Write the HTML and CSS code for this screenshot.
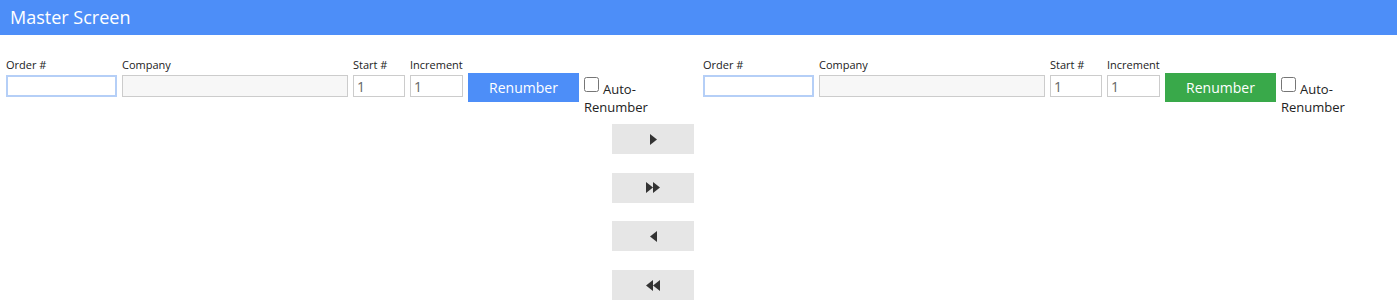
FILE: index.html
```
<!DOCTYPE html>
<html lang="en">
<head>
    <meta charset="UTF-8">
    <meta name="viewport" content="width=device-width, initial-scale=1.0">
    <title>Master Screen</title>
    <link rel="stylesheet" href="styles.css">
</head>
<body>
    <div class="title-bar">Master Screen</div>
    <div class="screen">
        <!-- source side -->
        <div class="panel">
            <div class="fields">
                <div class="field">
                    <label for="orderA">Order #</label>
                    <input type="text" id="orderA" class="order-input">
                </div>
                <div class="field">
                    <label for="companyA">Company</label>
                    <input type="text" id="companyA" class="company-input" readonly>
                </div>
                <div class="field">
                    <label for="startA">Start #</label>
                    <input type="text" id="startA" class="num-input" value="1">
                </div>
                <div class="field">
                    <label for="incA">Increment</label>
                    <input type="text" id="incA" class="num-input inc" value="1">
                </div>
                <button class="renumber blue">Renumber</button>
                <label class="auto"><input type="checkbox">Auto-Renumber</label>
            </div>
            <div class="transfer">
                <button class="move"><svg width="7" height="11" viewBox="0 0 7 11"><path d="M0 0L7 5.5L0 11Z"/></svg></button>
                <button class="move"><svg width="14" height="11" viewBox="0 0 14 11"><path d="M0 0L7 5.5L0 11ZM7 0L14 5.5L7 11Z"/></svg></button>
                <button class="move"><svg width="7" height="11" viewBox="0 0 7 11"><path d="M7 0L0 5.5L7 11Z"/></svg></button>
                <button class="move"><svg width="14" height="11" viewBox="0 0 14 11"><path d="M7 0L0 5.5L7 11ZM14 0L7 5.5L14 11Z"/></svg></button>
            </div>
        </div>
        <!-- target side -->
        <div class="panel">
            <div class="fields">
                <div class="field">
                    <label for="orderB">Order #</label>
                    <input type="text" id="orderB" class="order-input">
                </div>
                <div class="field">
                    <label for="companyB">Company</label>
                    <input type="text" id="companyB" class="company-input" readonly>
                </div>
                <div class="field">
                    <label for="startB">Start #</label>
                    <input type="text" id="startB" class="num-input" value="1">
                </div>
                <div class="field">
                    <label for="incB">Increment</label>
                    <input type="text" id="incB" class="num-input inc" value="1">
                </div>
                <button class="renumber green">Renumber</button>
                <label class="auto"><input type="checkbox">Auto-Renumber</label>
            </div>
        </div>
    </div>
</body>
</html>
```

FILE: styles.css
```
body {
    font-family: "Open Sans", Arial, sans-serif;
    margin: 0;
    color: #222;
    background-color: white;
}
.title-bar {
    background-color: #4d8ef8;
    color: white;
    height: 35px;
    line-height: 34px;
    padding-left: 10px;
    font-size: 18px;
}
.screen {
    display: flex;
    padding-top: 22px;
    padding-right: 3px;
}
.panel {
    flex: 1;
    padding-left: 6px;
    display: flex;
    flex-direction: column;
}
.fields {
    display: flex;
    align-items: flex-start;
    gap: 5px;
}
.field {
    display: flex;
    flex-direction: column;
}
.field label {
    font-size: 11px;
    line-height: 15px;
    margin-bottom: 3px;
    color: #222;
}
input[type="text"] {
    font-family: "Open Sans", Arial, sans-serif;
    font-size: 14px;
    color: #666;
    height: 22px;
    box-sizing: border-box;
    border: 1px solid #ccc;
    padding: 0 3px;
    margin: 0;
    outline: none;
}
.order-input {
    width: 111px;
    border: 2px solid #b5cff7 !important;
}
.company-input {
    width: 226px;
    background-color: #f7f7f7;
}
.num-input {
    width: 52px;
}
.num-input.inc {
    width: 53px;
}
.renumber {
    margin-top: 16px;
    width: 111px;
    height: 29px;
    border: none;
    color: white;
    font-family: "Open Sans", Arial, sans-serif;
    font-size: 14px;
    cursor: pointer;
}
.renumber.blue {
    background-color: #4d8ef8;
}
.renumber.green {
    background-color: #39a94a;
}
.auto {
    margin-top: 23px;
    width: 66px;
    font-size: 13px;
    line-height: 18px;
    color: #222;
}
.auto input {
    width: 15px;
    height: 15px;
    margin: -3px 4px 0 0;
    vertical-align: top;
}
.transfer {
    align-self: flex-end;
    margin-right: 3px;
    margin-top: 8px;
    display: flex;
    flex-direction: column;
    gap: 18.7px;
}
.move {
    width: 82px;
    height: 30px;
    border: none;
    background-color: #e6e6e6;
    display: flex;
    align-items: center;
    justify-content: center;
    padding: 0;
}
.move svg {
    fill: #333;
}
```
